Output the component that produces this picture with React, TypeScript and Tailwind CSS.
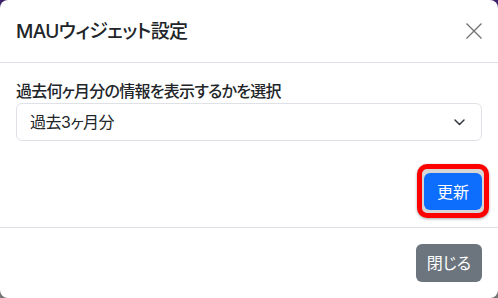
export default function App() {
  return (
    <div className="h-[298px] w-[498px] bg-gradient-to-b from-[#3a1f6a] to-[#777777] font-['Inter','Noto_Sans_CJK_JP',sans-serif] text-[#212529] [font-feature-settings:'palt']">
      <div className="flex h-full flex-col overflow-hidden rounded-lg bg-white">
        {/* header */}
        <div className="flex h-[63px] items-center justify-between border-b border-[#dee2e6] pl-4 pr-[16px]">
          <h5 className="pt-[2px] text-[19px] font-medium leading-[30px] tracking-[-0.6px]">MAUウィジェット設定</h5>
          <button className="flex h-4 w-4 items-center justify-center text-[#707070]" aria-label="close">
            <svg width="16" height="16" viewBox="0 0 16 16" fill="none" stroke="currentColor" strokeWidth="1.3">
              <path d="M0.5 0.5l15 15M15.5 0.5l-15 15" />
            </svg>
          </button>
        </div>

        {/* body */}
        <div className="flex flex-1 flex-col px-4 pt-4">
          <label className="text-[16px] font-medium leading-6 tracking-[-0.75px]">過去何ヶ月分の情報を表示するかを選択</label>
          <div className="flex h-[38px] items-center justify-between rounded-md border border-[#dee2e6] pl-[13px] pr-4">
            <span className="text-[16px] leading-6 tracking-[-0.5px]">過去3ヶ月分</span>
            <svg width="11" height="7" viewBox="0 0 11 7" fill="none" stroke="#343a40" strokeWidth="1.5" strokeLinecap="round" strokeLinejoin="round">
              <path d="M1 1l4.5 4.5L10 1" />
            </svg>
          </div>
          <div className="mt-8 flex justify-end">
            <div className="relative">
              <div className="absolute -bottom-[8px] -left-[7px] -right-[7px] -top-[9px] rounded-[10px] border-[5px] border-[#ff0000] bg-[#d6d6d6] shadow-[0_1px_3px_rgba(0,0,0,0.35)]" />
              <button className="relative h-[37px] w-[58px] rounded-md bg-[#0d6efd] text-[16px] text-white">更新</button>
            </div>
          </div>
        </div>

        {/* footer */}
        <div className="flex h-[71px] items-center justify-end border-t border-[#dee2e6] px-4">
          <button className="h-[38px] w-[66px] rounded-md bg-[#6c757d] text-[16px] text-white">閉じる</button>
        </div>
      </div>
    </div>
  )
}
